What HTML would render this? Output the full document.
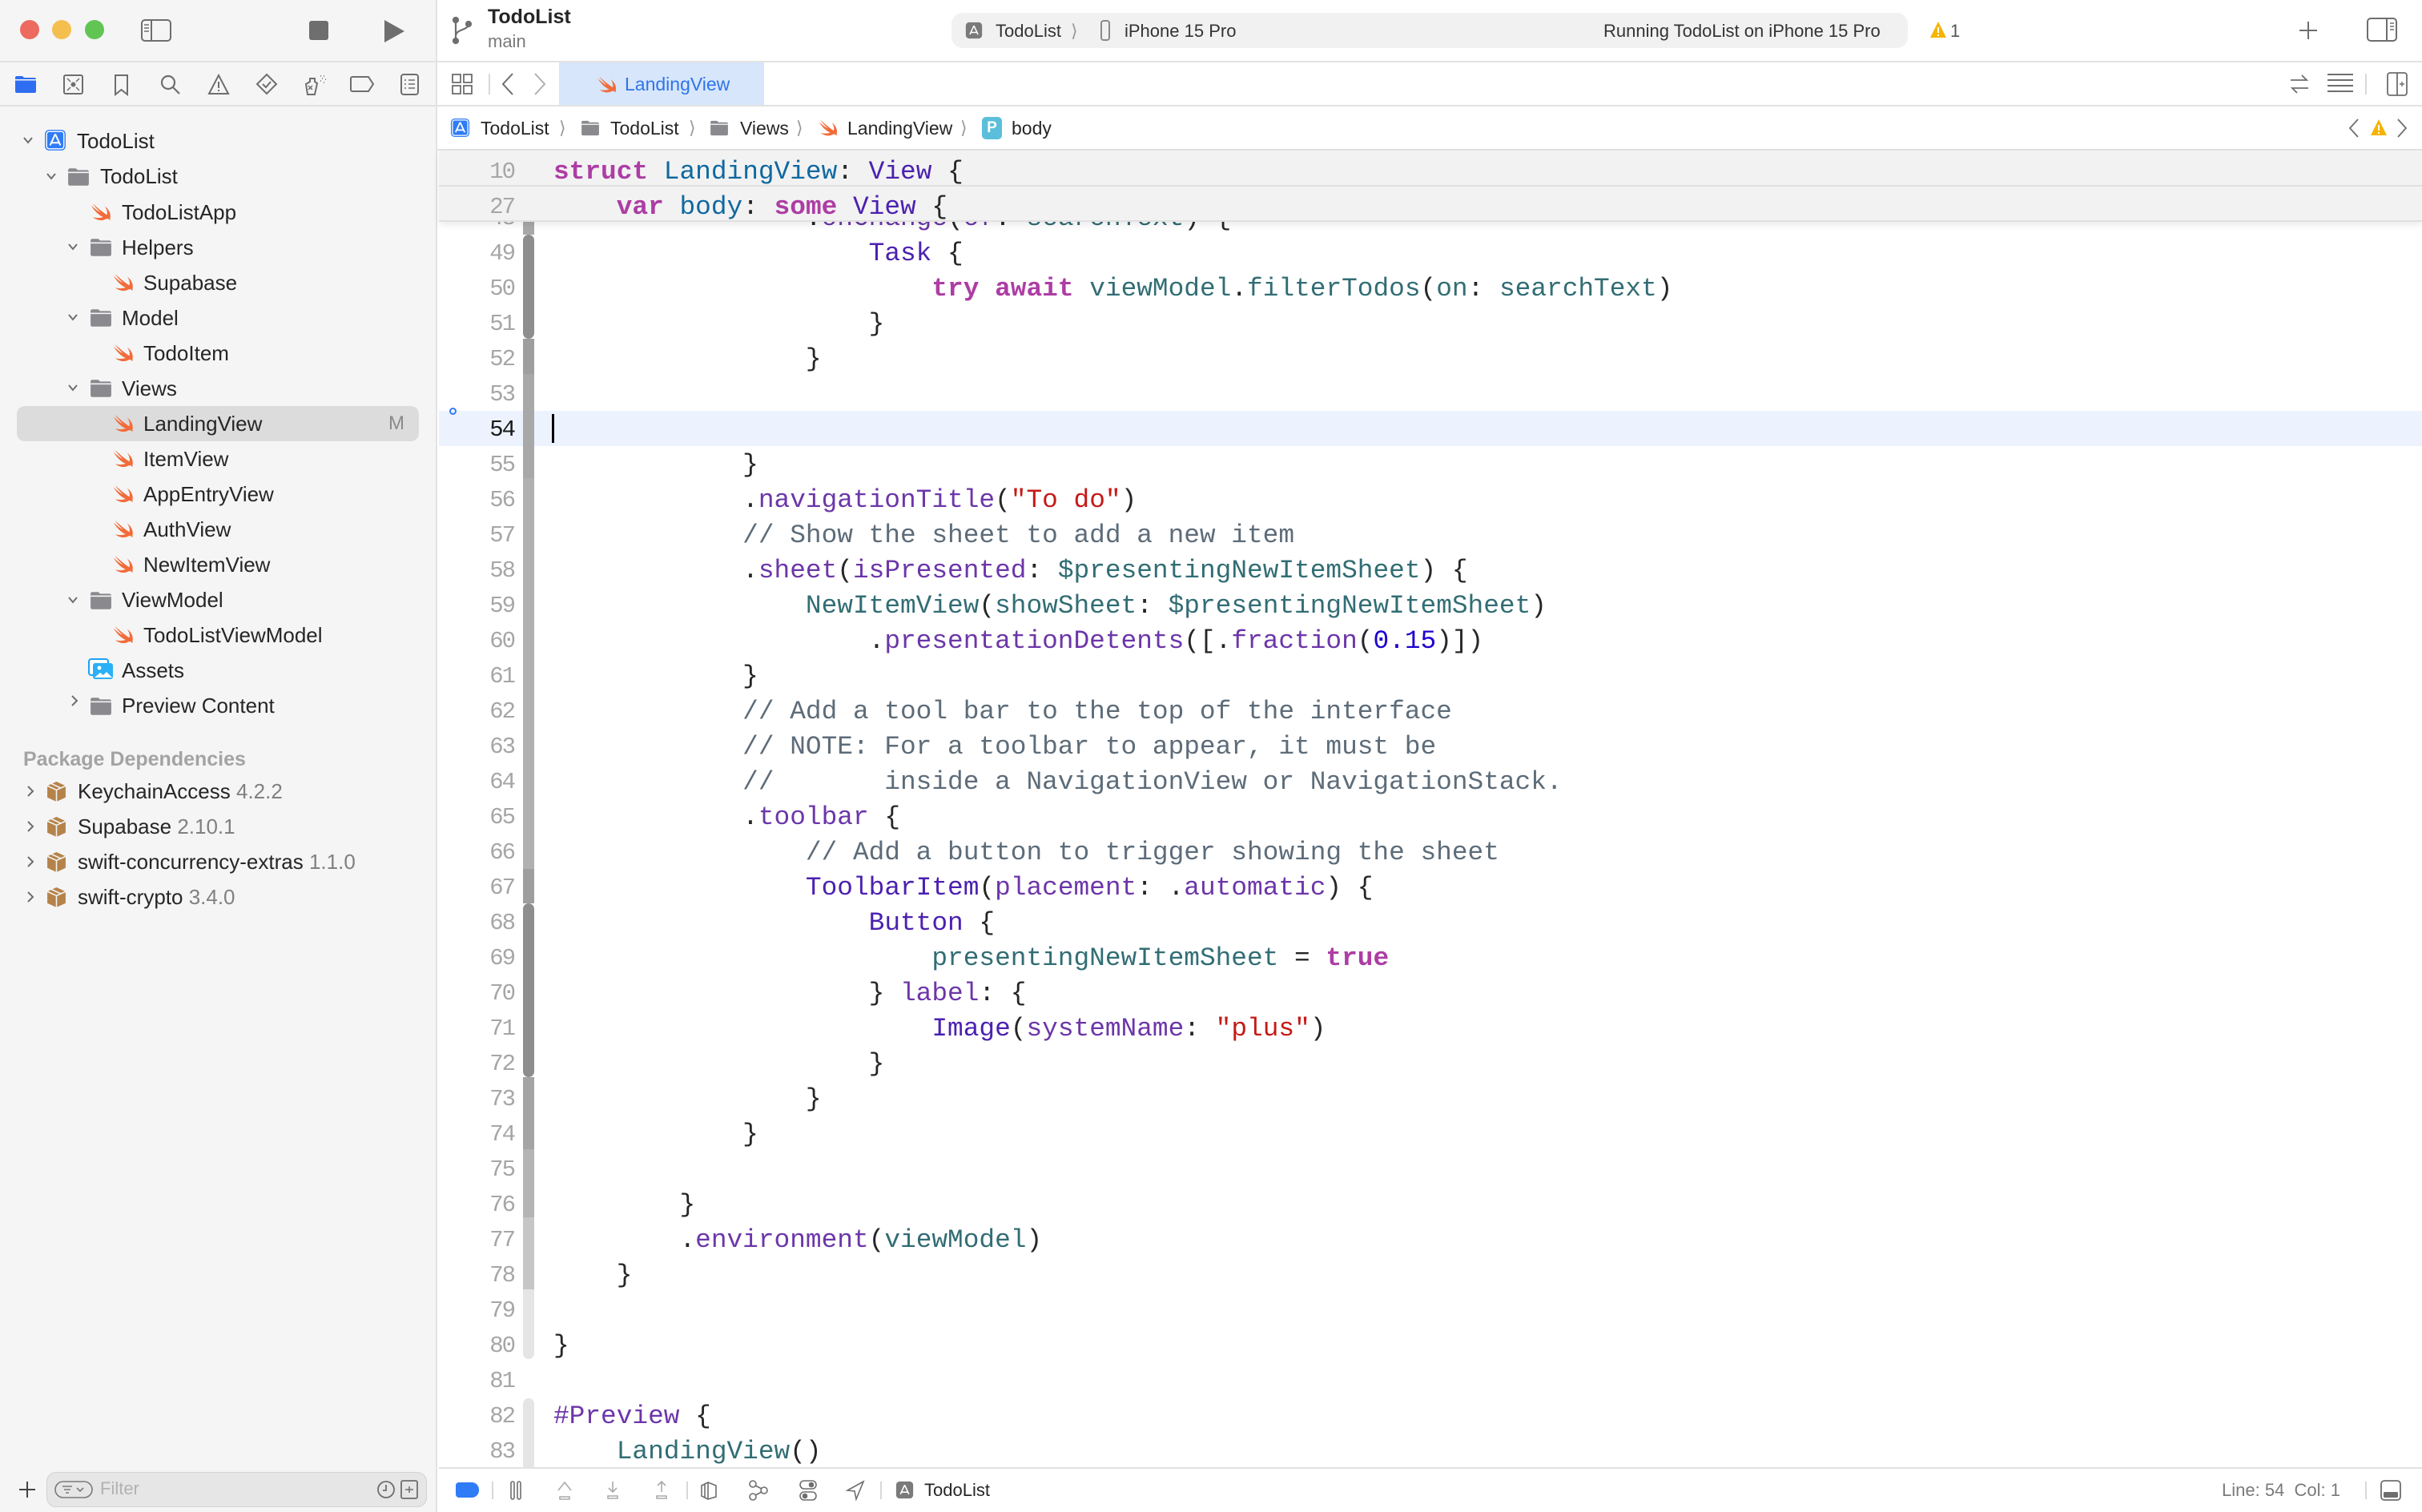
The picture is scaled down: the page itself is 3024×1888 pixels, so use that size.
<!DOCTYPE html>
<html><head><meta charset="utf-8">
<style>
*{margin:0;padding:0;box-sizing:border-box}
body{width:3024px;height:1888px;position:relative;overflow:hidden;background:#fff;font-family:"Liberation Sans",sans-serif;color:#262626}
.a{position:absolute}
.sb{left:0;top:0;width:546px;height:1888px;background:#f5f5f5;border-right:2px solid #e2e2e2}
.hl{position:absolute;height:2px;background:#e2e2e2}
.row{position:absolute;height:44px;line-height:44px;font-size:26px;white-space:nowrap}
.code{position:absolute;left:691px;height:44px;line-height:44px;margin-top:2px;font-family:"Liberation Mono",monospace;font-size:32.8px;white-space:pre;color:#262626}
.ln{position:absolute;left:560px;width:82px;text-align:right;height:44px;line-height:44px;margin-top:2px;font-family:"Liberation Mono",monospace;font-size:29px;color:#a6a6a6;letter-spacing:-2px}
.hd{margin-top:5px}
.k{color:#ad3da4;font-weight:bold}.t{color:#4b21b0}.s{color:#6c36a9}.p{color:#326d74}.d{color:#0f68a0}.st{color:#c41a16}.n{color:#1c00cf}.c{color:#5d6c79}
.ui{font-size:22px;position:absolute;white-space:nowrap}
svg{position:absolute;overflow:visible}
</style></head><body>
<svg width="0" height="0" style="position:absolute"><defs>
<symbol id="sw" viewBox="0 0 24 24"><path fill="#f26b3a" d="M21 18.5c1.3-3.8-.2-8.8-5.2-12.6 2.3 3.2 3 6.6 2.1 8.8C13.2 11.6 8.3 7.4 3.6 3.2c2.4 3.4 5.6 6.8 8.2 9.2-3.4-1.7-7-4.6-9.6-7.3 2.7 5 7.2 9.6 12 11.7-3 1.1-6.6 1.1-10.2.2 3.5 2.8 8.6 4.2 12.5 2 1.9-.9 3.5-.4 4.3 1 .7-.8.8-1.6.2-1.5z"/></symbol>
<symbol id="fd" viewBox="0 0 26 22"><path fill="#8a8a8e" d="M1 3a2 2 0 0 1 2-2h7l2 2h11a2 2 0 0 1 2 2v14a2 2 0 0 1-2 2H3a2 2 0 0 1-2-2z"/><rect x="1" y="5" width="24" height="1.5" fill="#f5f5f5"/></symbol>
<symbol id="bx" viewBox="0 0 26 26"><path fill="#b5834a" d="M13 1l11 5v14l-11 5-11-5V6z"/><path d="M2 6l11 5 11-5M13 11v14M7 3.5l11 5" stroke="#f5f5f5" stroke-width="1.5" fill="none"/></symbol>
<symbol id="ap" viewBox="0 0 26 26"><rect x="1" y="1" width="24" height="24" rx="5" fill="#2f7cf6"/><rect x="3" y="3" width="20" height="20" rx="3" fill="none" stroke="#fff" stroke-width="1.3"/><path d="M13 6l-6 13M13 6l6 13M8 16h10" stroke="#fff" stroke-width="1.8" fill="none"/></symbol>
<symbol id="apg" viewBox="0 0 26 26"><rect x="1" y="1" width="24" height="24" rx="5" fill="#7a7a7a"/><path d="M13 6l-6 13M13 6l6 13M8 16h10" stroke="#fff" stroke-width="1.8" fill="none"/></symbol>
<symbol id="chd" viewBox="0 0 16 16"><path d="M3 5l5 6 5-6" stroke="#6e6e6e" stroke-width="2" fill="none"/></symbol>
<symbol id="chr" viewBox="0 0 16 16"><path d="M5 2l6 6-6 6" stroke="#6e6e6e" stroke-width="2" fill="none"/></symbol>
</defs></svg>

<div class="a sb"></div>
<div class="hl" style="left:0;top:76px;width:3024px"></div>
<div class="hl" style="left:0;top:131px;width:3024px"></div>
<div class="hl" style="left:546px;top:186px;width:2478px"></div>

<div class="a" style="left:25px;top:25px;width:24px;height:24px;border-radius:50%;background:#ed6a5e"></div>
<div class="a" style="left:65px;top:25px;width:24px;height:24px;border-radius:50%;background:#f5bf4f"></div>
<div class="a" style="left:106px;top:25px;width:24px;height:24px;border-radius:50%;background:#61c554"></div>
<svg style="left:176px;top:24px" width="38" height="28"><rect x="1" y="1" width="36" height="26" rx="4" fill="none" stroke="#6e6e6e" stroke-width="2"/><line x1="13" y1="1" x2="13" y2="27" stroke="#6e6e6e" stroke-width="2"/><path d="M4 7h6M4 11h6M4 15h6" stroke="#6e6e6e" stroke-width="1.5"/></svg>
<div class="a" style="left:386px;top:26px;width:24px;height:24px;border-radius:3px;background:#6e6e6e"></div>
<svg style="left:478px;top:24px" width="28" height="30"><path d="M2 1l25 14L2 29z" fill="#6e6e6e"/></svg>

<svg style="left:19px;top:94px" width="26" height="22"><path d="M0 3a2 2 0 0 1 2-2h7l2 2h13a2 2 0 0 1 2 2v15a2 2 0 0 1-2 2H2a2 2 0 0 1-2-2z" fill="#2f6ef0"/><rect x="0" y="5" width="26" height="1.5" fill="#f5f5f5"/></svg>
<svg style="left:79px;top:93px" width="25" height="25" fill="none" stroke="#6e6e6e" stroke-width="2"><rect x="1" y="1" width="23" height="23" rx="2"/><circle cx="12.5" cy="12.5" r="2" fill="#6e6e6e"/><path d="M5 5l4 4M20 5l-4 4M5 20l4-4M20 20l-4-4" stroke-width="1.5"/></svg>
<svg style="left:143px;top:93px" width="17" height="26" fill="none" stroke="#6e6e6e" stroke-width="2"><path d="M1 1h15v24l-7.5-6L1 25z"/></svg>
<svg style="left:200px;top:93px" width="26" height="26" fill="none" stroke="#6e6e6e" stroke-width="2.2"><circle cx="10" cy="10" r="8"/><path d="M16 16l8 8"/></svg>
<svg style="left:260px;top:93px" width="26" height="25" fill="none" stroke="#6e6e6e" stroke-width="2"><path d="M13 1L1 24h24z"/><path d="M13 9v8M13 19v2"/></svg>
<svg style="left:320px;top:92px" width="26" height="26" fill="none" stroke="#6e6e6e" stroke-width="2"><path d="M13 1l12 12-12 12L1 13z"/><path d="M8 13l4 4 6-7"/></svg>
<svg style="left:380px;top:92px" width="28" height="28" fill="none" stroke="#6e6e6e" stroke-width="2"><path d="M7 6h6v4l3 2-3 14H4L2 13l5-3z"/><path d="M5 15l5 5M10 15l-5 5" stroke-width="1.5"/><path d="M20 3h1M24 3h1M22 6h1M26 7h1M20 9h1M24 11h1" stroke-width="1.6"/></svg>
<svg style="left:437px;top:95px" width="30" height="20" fill="none" stroke="#6e6e6e" stroke-width="2"><path d="M3 1h20l6 9-6 9H3a2 2 0 0 1-2-2V3a2 2 0 0 1 2-2z"/></svg>
<svg style="left:500px;top:92px" width="23" height="27" fill="none" stroke="#6e6e6e" stroke-width="2"><rect x="1" y="1" width="21" height="25" rx="3"/><path d="M5 8h2M10 8h8M5 13h2M10 13h8M5 18h2M10 18h8" stroke-width="1.6"/></svg>

<svg style="left:27px;top:167px" width="16" height="16"><use href="#chd"/></svg>
<svg style="left:55px;top:161px" width="28" height="28"><use href="#ap"/></svg>
<div class="row" style="left:96px;top:154px">TodoList</div>

<svg style="left:56px;top:212px" width="16" height="16"><use href="#chd"/></svg>
<svg style="left:84px;top:209px" width="28" height="24"><use href="#fd"/></svg>
<div class="row" style="left:125px;top:198px">TodoList</div>

<svg style="left:111px;top:250px" width="30" height="30"><use href="#sw"/></svg>
<div class="row" style="left:152px;top:243px">TodoListApp</div>

<svg style="left:83px;top:300px" width="16" height="16"><use href="#chd"/></svg>
<svg style="left:112px;top:297px" width="28" height="24"><use href="#fd"/></svg>
<div class="row" style="left:152px;top:287px">Helpers</div>
<svg style="left:139px;top:338px" width="30" height="30"><use href="#sw"/></svg>
<div class="row" style="left:179px;top:331px">Supabase</div>

<svg style="left:83px;top:388px" width="16" height="16"><use href="#chd"/></svg>
<svg style="left:112px;top:385px" width="28" height="24"><use href="#fd"/></svg>
<div class="row" style="left:152px;top:375px">Model</div>
<svg style="left:139px;top:426px" width="30" height="30"><use href="#sw"/></svg>
<div class="row" style="left:179px;top:419px">TodoItem</div>

<svg style="left:83px;top:476px" width="16" height="16"><use href="#chd"/></svg>
<svg style="left:112px;top:473px" width="28" height="24"><use href="#fd"/></svg>
<div class="row" style="left:152px;top:463px">Views</div>

<div class="a" style="left:21px;top:507px;width:502px;height:44px;border-radius:10px;background:#dcdcdc"></div>
<svg style="left:139px;top:514px" width="30" height="30"><use href="#sw"/></svg>
<div class="row" style="left:179px;top:507px">LandingView</div>
<div class="row" style="left:485px;top:507px;color:#8a8a8a;font-size:24px">M</div>

<svg style="left:139px;top:558px" width="30" height="30"><use href="#sw"/></svg>
<div class="row" style="left:179px;top:551px">ItemView</div>
<svg style="left:139px;top:602px" width="30" height="30"><use href="#sw"/></svg>
<div class="row" style="left:179px;top:595px">AppEntryView</div>
<svg style="left:139px;top:646px" width="30" height="30"><use href="#sw"/></svg>
<div class="row" style="left:179px;top:639px">AuthView</div>
<svg style="left:139px;top:690px" width="30" height="30"><use href="#sw"/></svg>
<div class="row" style="left:179px;top:683px">NewItemView</div>

<svg style="left:83px;top:741px" width="16" height="16"><use href="#chd"/></svg>
<svg style="left:112px;top:738px" width="28" height="24"><use href="#fd"/></svg>
<div class="row" style="left:152px;top:727px">ViewModel</div>
<svg style="left:139px;top:778px" width="30" height="30"><use href="#sw"/></svg>
<div class="row" style="left:179px;top:771px">TodoListViewModel</div>

<svg style="left:110px;top:822px" width="32" height="28"><rect x="1" y="1" width="24" height="20" rx="3" fill="#fff" stroke="#1da1f2" stroke-width="2"/><rect x="6" y="6" width="25" height="20" rx="3" fill="#2ab0f5"/><circle cx="14" cy="12" r="2.5" fill="#fff"/><path d="M8 24l7-6 4 3 4-4 7 7z" fill="#fff"/></svg>
<div class="row" style="left:152px;top:815px">Assets</div>

<svg style="left:85px;top:867px" width="16" height="16"><use href="#chr"/></svg>
<svg style="left:112px;top:870px" width="28" height="24"><use href="#fd"/></svg>
<div class="row" style="left:152px;top:859px">Preview Content</div>

<div class="row" style="left:29px;top:926px;font-size:25px;color:#a3a3a3;font-weight:bold">Package Dependencies</div>
<svg style="left:30px;top:980px" width="16" height="16"><use href="#chr"/></svg>
<svg style="left:57px;top:975px" width="27" height="27"><use href="#bx"/></svg>
<div class="row" style="left:97px;top:966px">KeychainAccess <span style="color:#808080">4.2.2</span></div>
<svg style="left:30px;top:1024px" width="16" height="16"><use href="#chr"/></svg>
<svg style="left:57px;top:1019px" width="27" height="27"><use href="#bx"/></svg>
<div class="row" style="left:97px;top:1010px">Supabase <span style="color:#808080">2.10.1</span></div>
<svg style="left:30px;top:1068px" width="16" height="16"><use href="#chr"/></svg>
<svg style="left:57px;top:1063px" width="27" height="27"><use href="#bx"/></svg>
<div class="row" style="left:97px;top:1054px">swift-concurrency-extras <span style="color:#808080">1.1.0</span></div>
<svg style="left:30px;top:1112px" width="16" height="16"><use href="#chr"/></svg>
<svg style="left:57px;top:1107px" width="27" height="27"><use href="#bx"/></svg>
<div class="row" style="left:97px;top:1098px">swift-crypto <span style="color:#808080">3.4.0</span></div>

<svg style="left:24px;top:1850px" width="20" height="20"><path d="M10 0v20M0 10h20" stroke="#444" stroke-width="2"/></svg>
<div class="a" style="left:58px;top:1838px;width:475px;height:44px;border-radius:12px;background:#e6e6e6;border:1.5px solid #d2d2d2"></div>
<svg style="left:68px;top:1849px" width="48" height="22" fill="none" stroke="#7a7a7a" stroke-width="1.6"><rect x="1" y="1" width="46" height="20" rx="10"/><path d="M10 7h12M12 11h8M14 15h4M28 9l4 4 4-4"/></svg>
<div class="ui" style="left:125px;top:1846px;color:#b2b2b2;font-size:22px">Filter</div>
<svg style="left:471px;top:1849px" width="22" height="22" fill="none" stroke="#6e6e6e" stroke-width="1.8"><circle cx="11" cy="11" r="10"/><path d="M11 5v7H7"/></svg>
<svg style="left:500px;top:1848px" width="22" height="24" fill="none" stroke="#6e6e6e" stroke-width="1.8"><rect x="1" y="1" width="20" height="22" rx="2"/><path d="M6 12h10M11 8v8" stroke-width="1.5"/></svg>

<svg style="left:564px;top:20px" width="26" height="36" fill="none" stroke="#6e6e6e" stroke-width="2.2"><circle cx="5" cy="5" r="3" fill="#6e6e6e"/><circle cx="5" cy="31" r="3" fill="#6e6e6e"/><circle cx="21" cy="10" r="3" fill="#6e6e6e"/><path d="M5 5v26M21 10c0 8-16 6-16 15"/></svg>
<div class="ui" style="left:609px;top:7px;font-size:25px;font-weight:bold;color:#262626">TodoList</div>
<div class="ui" style="left:609px;top:39px;font-size:22px;color:#7a7a7a">main</div>

<div class="a" style="left:1188px;top:16px;width:1194px;height:44px;border-radius:14px;background:#f1f1f1"></div>
<svg style="left:1205px;top:27px" width="22" height="22"><use href="#apg"/></svg>
<div class="ui" style="left:1243px;top:26px;color:#333">TodoList</div>
<div class="ui" style="left:1337px;top:26px;color:#999">⟩</div>
<svg style="left:1374px;top:25px" width="12" height="26" fill="none" stroke="#8a8a8a" stroke-width="2"><rect x="1" y="1" width="10" height="24" rx="3"/></svg>
<div class="ui" style="left:1404px;top:26px;color:#333">iPhone 15 Pro</div>
<div class="ui" style="left:2002px;top:26px;color:#333">Running TodoList on iPhone 15 Pro</div>
<svg style="left:2409px;top:26px" width="22" height="22"><path d="M11 1L1 21h20z" fill="#f5b400"/><path d="M11 8v7M11 17v2" stroke="#fff" stroke-width="2"/></svg>
<div class="ui" style="left:2435px;top:26px;color:#555">1</div>
<svg style="left:2871px;top:27px" width="22" height="22"><path d="M11 0v22M0 11h22" stroke="#6e6e6e" stroke-width="2"/></svg>
<svg style="left:2955px;top:22px" width="38" height="30" fill="none" stroke="#6e6e6e" stroke-width="2"><rect x="1" y="1" width="36" height="28" rx="4"/><line x1="25" y1="1" x2="25" y2="29"/><path d="M29 7h5M29 11h5M29 15h5" stroke-width="1.5"/></svg>

<svg style="left:564px;top:92px" width="26" height="26" fill="none" stroke="#6e6e6e" stroke-width="1.8"><rect x="1" y="1" width="10" height="10"/><rect x="15" y="1" width="10" height="10"/><rect x="1" y="15" width="10" height="10"/><rect x="15" y="15" width="10" height="10"/></svg>
<div class="a" style="left:610px;top:92px;width:1.5px;height:26px;background:#d8d8d8"></div>
<svg style="left:626px;top:91px" width="16" height="28"><path d="M14 1L2 14l12 13" stroke="#6e6e6e" stroke-width="2" fill="none"/></svg>
<svg style="left:666px;top:91px" width="16" height="28"><path d="M2 1l12 13L2 27" stroke="#b0b0b0" stroke-width="2" fill="none"/></svg>
<div class="a" style="left:698px;top:78px;width:256px;height:53px;background:#d7e6fb"></div>
<svg style="left:744px;top:92px" width="28" height="28"><use href="#sw"/></svg>
<div class="ui" style="left:780px;top:92px;color:#2f74ea;font-size:23px">LandingView</div>
<svg style="left:2858px;top:91px" width="26" height="28" fill="none" stroke="#6e6e6e" stroke-width="1.8"><path d="M2 9h20l-6-6M24 19H4l6 6"/></svg>
<svg style="left:2904px;top:91px" width="36" height="28" stroke="#6e6e6e" stroke-width="2"><path d="M2 2h32M2 9h32M2 16h32M2 23h32"/></svg>
<div class="a" style="left:2953px;top:92px;width:1.5px;height:26px;background:#d8d8d8"></div>
<svg style="left:2980px;top:90px" width="26" height="30" fill="none" stroke="#6e6e6e" stroke-width="1.8"><rect x="1" y="1" width="24" height="28" rx="3"/><line x1="13" y1="1" x2="13" y2="29"/><path d="M16 15h6M19 12v6" stroke-width="1.4"/></svg>

<svg style="left:562px;top:147px" width="25" height="25"><use href="#ap"/></svg>
<div class="ui" style="left:600px;top:147px;font-size:23px">TodoList</div>
<div class="ui" style="left:698px;top:147px;color:#999">⟩</div>
<svg style="left:725px;top:150px" width="24" height="20"><use href="#fd"/></svg>
<div class="ui" style="left:762px;top:147px;font-size:23px">TodoList</div>
<div class="ui" style="left:860px;top:147px;color:#999">⟩</div>
<svg style="left:886px;top:150px" width="24" height="20"><use href="#fd"/></svg>
<div class="ui" style="left:924px;top:147px;font-size:23px">Views</div>
<div class="ui" style="left:994px;top:147px;color:#999">⟩</div>
<svg style="left:1020px;top:146px" width="28" height="28"><use href="#sw"/></svg>
<div class="ui" style="left:1058px;top:147px;font-size:23px">LandingView</div>
<div class="ui" style="left:1199px;top:147px;color:#999">⟩</div>
<div class="a" style="left:1226px;top:146px;width:25px;height:28px;border-radius:5px;background:#5bbfdb;color:#fff;font-size:19px;text-align:center;line-height:28px;font-weight:bold">P</div>
<div class="ui" style="left:1263px;top:147px;font-size:23px">body</div>
<svg style="left:2932px;top:148px" width="14" height="24"><path d="M12 1L2 12l10 11" stroke="#6e6e6e" stroke-width="1.8" fill="none"/></svg>
<svg style="left:2959px;top:148px" width="22" height="22"><path d="M11 1L1 21h20z" fill="#f5b400"/><path d="M11 8v7M11 17v2" stroke="#fff" stroke-width="2"/></svg>
<svg style="left:2992px;top:148px" width="14" height="24"><path d="M2 1l10 11L2 23" stroke="#6e6e6e" stroke-width="1.8" fill="none"/></svg>

<div class="a" style="left:548px;top:513px;width:2476px;height:44px;background:#ecf3fe"></div>
<div class="a" style="left:561px;top:509px;width:9px;height:9px;border-radius:50%;border:2px solid #2f7cf6"></div>

<div class="a" style="left:653px;top:277px;width:14px;height:16px;background:#a8a8a8"></div>
<div class="a" style="left:653px;top:293px;width:14px;height:130px;background:#8e8e8e;border-radius:7px"></div>
<div class="a" style="left:653px;top:423px;width:14px;height:44px;background:#9e9e9e"></div>
<div class="a" style="left:653px;top:467px;width:14px;height:130px;background:#a8a8a8"></div>
<div class="a" style="left:653px;top:597px;width:14px;height:488px;background:#b0b0b0"></div>
<div class="a" style="left:653px;top:1085px;width:14px;height:43px;background:#9e9e9e"></div>
<div class="a" style="left:653px;top:1128px;width:14px;height:217px;background:#8e8e8e;border-radius:7px"></div>
<div class="a" style="left:653px;top:1345px;width:14px;height:90px;background:#a4a4a4"></div>
<div class="a" style="left:653px;top:1435px;width:14px;height:85px;background:#b4b4b4"></div>
<div class="a" style="left:653px;top:1520px;width:14px;height:90px;background:#c6c6c6"></div>
<div class="a" style="left:653px;top:1610px;width:14px;height:87px;background:#e5e5e5;border-radius:0 0 7px 7px"></div>
<div class="a" style="left:653px;top:1746px;width:14px;height:87px;background:#e5e5e5;border-radius:7px 7px 0 0"></div>

<div class="ln" style="top:249px">48</div>
<div class="ln" style="top:293px">49</div>
<div class="ln" style="top:337px">50</div>
<div class="ln" style="top:381px">51</div>
<div class="ln" style="top:425px">52</div>
<div class="ln" style="top:469px">53</div>
<div class="ln" style="top:513px;color:#1a1a1a">54</div>
<div class="ln" style="top:557px">55</div>
<div class="ln" style="top:601px">56</div>
<div class="ln" style="top:645px">57</div>
<div class="ln" style="top:689px">58</div>
<div class="ln" style="top:733px">59</div>
<div class="ln" style="top:777px">60</div>
<div class="ln" style="top:821px">61</div>
<div class="ln" style="top:865px">62</div>
<div class="ln" style="top:909px">63</div>
<div class="ln" style="top:953px">64</div>
<div class="ln" style="top:997px">65</div>
<div class="ln" style="top:1041px">66</div>
<div class="ln" style="top:1085px">67</div>
<div class="ln" style="top:1129px">68</div>
<div class="ln" style="top:1173px">69</div>
<div class="ln" style="top:1217px">70</div>
<div class="ln" style="top:1261px">71</div>
<div class="ln" style="top:1305px">72</div>
<div class="ln" style="top:1349px">73</div>
<div class="ln" style="top:1393px">74</div>
<div class="ln" style="top:1437px">75</div>
<div class="ln" style="top:1481px">76</div>
<div class="ln" style="top:1525px">77</div>
<div class="ln" style="top:1569px">78</div>
<div class="ln" style="top:1613px">79</div>
<div class="ln" style="top:1657px">80</div>
<div class="ln" style="top:1701px">81</div>
<div class="ln" style="top:1745px">82</div>
<div class="ln" style="top:1789px">83</div>

<div class="code" style="top:249px">                .<span class="s">onChange</span>(<span class="s">of</span>: <span class="p">searchText</span>) {</div>
<div class="code" style="top:293px">                    <span class="t">Task</span> {</div>
<div class="code" style="top:337px">                        <span class="k">try</span> <span class="k">await</span> <span class="p">viewModel</span>.<span class="p">filterTodos</span>(<span class="p">on</span>: <span class="p">searchText</span>)</div>
<div class="code" style="top:381px">                    }</div>
<div class="code" style="top:425px">                }</div>
<div class="a" style="left:689px;top:517px;width:3px;height:36px;background:#000"></div>
<div class="code" style="top:557px">            }</div>
<div class="code" style="top:601px">            .<span class="s">navigationTitle</span>(<span class="st">"To do"</span>)</div>
<div class="code c" style="top:645px">            // Show the sheet to add a new item</div>
<div class="code" style="top:689px">            .<span class="s">sheet</span>(<span class="s">isPresented</span>: <span class="p">$presentingNewItemSheet</span>) {</div>
<div class="code" style="top:733px">                <span class="p">NewItemView</span>(<span class="p">showSheet</span>: <span class="p">$presentingNewItemSheet</span>)</div>
<div class="code" style="top:777px">                    .<span class="s">presentationDetents</span>([.<span class="s">fraction</span>(<span class="n">0.15</span>)])</div>
<div class="code" style="top:821px">            }</div>
<div class="code c" style="top:865px">            // Add a tool bar to the top of the interface</div>
<div class="code c" style="top:909px">            // NOTE: For a toolbar to appear, it must be</div>
<div class="code c" style="top:953px">            //       inside a NavigationView or NavigationStack.</div>
<div class="code" style="top:997px">            .<span class="s">toolbar</span> {</div>
<div class="code c" style="top:1041px">                // Add a button to trigger showing the sheet</div>
<div class="code" style="top:1085px">                <span class="t">ToolbarItem</span>(<span class="s">placement</span>: .<span class="s">automatic</span>) {</div>
<div class="code" style="top:1129px">                    <span class="t">Button</span> {</div>
<div class="code" style="top:1173px">                        <span class="p">presentingNewItemSheet</span> = <span class="k">true</span></div>
<div class="code" style="top:1217px">                    } <span class="s">label</span>: {</div>
<div class="code" style="top:1261px">                        <span class="t">Image</span>(<span class="s">systemName</span>: <span class="st">"plus"</span>)</div>
<div class="code" style="top:1305px">                    }</div>
<div class="code" style="top:1349px">                }</div>
<div class="code" style="top:1393px">            }</div>
<div class="code" style="top:1481px">        }</div>
<div class="code" style="top:1525px">        .<span class="s">environment</span>(<span class="p">viewModel</span>)</div>
<div class="code" style="top:1569px">    }</div>
<div class="code" style="top:1657px">}</div>
<div class="code" style="top:1745px"><span class="s">#Preview</span> {</div>
<div class="code" style="top:1789px">    <span class="p">LandingView</span>()</div>

<div class="a" style="left:548px;top:188px;width:2476px;height:89px;background:#f2f2f2;box-shadow:0 4px 8px rgba(0,0,0,0.08)"></div>
<div class="a" style="left:548px;top:231px;width:2476px;height:2px;background:#e0e0e0"></div>
<div class="a" style="left:548px;top:275px;width:2476px;height:2px;background:#e0e0e0"></div>
<div class="ln hd" style="top:188px">10</div>
<div class="ln hd" style="top:232px">27</div>
<div class="code hd" style="top:188px"><span class="k">struct</span> <span class="d">LandingView</span>: <span class="t">View</span> {</div>
<div class="code hd" style="top:232px">    <span class="k">var</span> <span class="d">body</span>: <span class="k">some</span> <span class="t">View</span> {</div>

<div class="a" style="left:548px;top:1834px;width:2476px;height:54px;background:#fff"></div>
<div class="a" style="left:548px;top:1832px;width:2476px;height:2px;background:#e2e2e2"></div>
<div class="a" style="left:569px;top:1851px;width:29px;height:19px;border-radius:4px 9px 9px 4px;background:#2f7cf6"></div>
<div class="a" style="left:614px;top:1850px;width:1.5px;height:22px;background:#d8d8d8"></div>
<svg style="left:637px;top:1849px" width="14" height="24" fill="none" stroke="#6e6e6e" stroke-width="1.6"><rect x="1" y="1" width="4" height="22" rx="2"/><rect x="9" y="1" width="4" height="22" rx="2"/></svg>
<svg style="left:694px;top:1849px" width="22" height="24" fill="none" stroke="#aaa" stroke-width="1.6"><path d="M3 12l8-10 8 10M5 20h12v3H5z"/></svg>
<svg style="left:756px;top:1849px" width="18" height="24" fill="none" stroke="#aaa" stroke-width="1.6"><path d="M9 1v13M4 9l5 5 5-5M3 19h12v3H3z"/></svg>
<svg style="left:817px;top:1849px" width="18" height="24" fill="none" stroke="#aaa" stroke-width="1.6"><path d="M9 14V1M4 6l5-5 5 5M3 19h12v3H3z"/></svg>
<div class="a" style="left:857px;top:1850px;width:1.5px;height:22px;background:#d8d8d8"></div>
<svg style="left:874px;top:1849px" width="22" height="24" fill="none" stroke="#6e6e6e" stroke-width="1.6"><path d="M2 6l8-4 10 4v14l-10 3-8-4z M10 2v20M6 4v17"/></svg>
<svg style="left:934px;top:1848px" width="26" height="26" fill="none" stroke="#6e6e6e" stroke-width="1.6"><circle cx="6" cy="5" r="4"/><circle cx="20" cy="13" r="4"/><circle cx="6" cy="21" r="4"/><path d="M9 7l8 4M9 19l8-4"/></svg>
<svg style="left:998px;top:1848px" width="22" height="26" fill="none" stroke="#6e6e6e" stroke-width="1.6"><rect x="1" y="1" width="20" height="10" rx="5"/><rect x="1" y="15" width="20" height="10" rx="5"/><circle cx="15" cy="6" r="2.5" fill="#6e6e6e"/><circle cx="7" cy="20" r="2.5" fill="#6e6e6e"/></svg>
<svg style="left:1056px;top:1848px" width="24" height="26" fill="none" stroke="#6e6e6e" stroke-width="1.6"><path d="M22 2L2 13l9 1 2 10z"/></svg>
<div class="a" style="left:1099px;top:1850px;width:1.5px;height:22px;background:#d8d8d8"></div>
<svg style="left:1118px;top:1849px" width="23" height="23"><use href="#apg"/></svg>
<div class="ui" style="left:1154px;top:1848px;color:#262626">TodoList</div>
<div class="ui" style="left:2774px;top:1848px;color:#7a7a7a;font-size:22px">Line: 54&nbsp;&nbsp;Col: 1</div>
<div class="a" style="left:2953px;top:1850px;width:1.5px;height:22px;background:#d8d8d8"></div>
<svg style="left:2972px;top:1848px" width="26" height="26" fill="none" stroke="#6e6e6e" stroke-width="1.8"><rect x="1" y="1" width="24" height="24" rx="4"/><rect x="4" y="15" width="18" height="7" rx="1.5" fill="#6e6e6e" stroke="none"/></svg>
</body></html>
